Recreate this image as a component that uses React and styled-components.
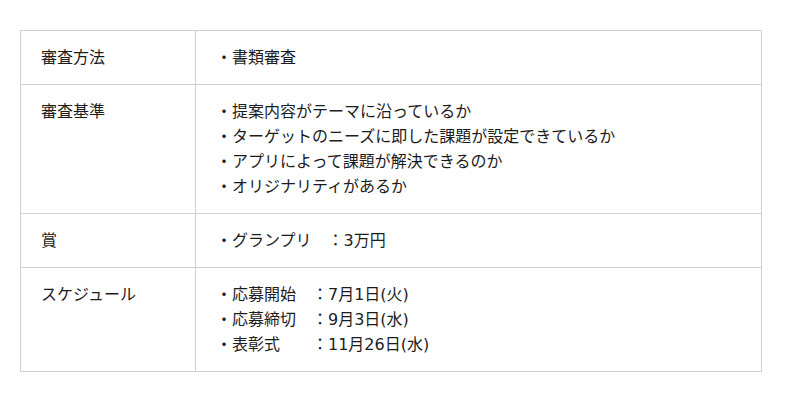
import React from 'react'
import styled, { createGlobalStyle } from 'styled-components'

const GlobalStyle = createGlobalStyle`
  body {
    margin: 0;
    background: #fff;
    font-family: "DejaVu Sans", "Noto Sans CJK JP", sans-serif;
    color: #1c1c1c;
  }
`

const Wrapper = styled.div`
  padding: 30px 0 0 20px;
`

const Table = styled.table`
  width: 742px;
  border-collapse: collapse;
  font-size: 16px;
  line-height: 25px;
`

const HeadCell = styled.th`
  width: 134px;
  padding: 14px 20px;
  border: 1px solid #d0d0d0;
  text-align: left;
  font-weight: normal;
  vertical-align: top;
`

const Cell = styled.td`
  padding: 14px 20px;
  border: 1px solid #d0d0d0;
  vertical-align: top;
`

const Line = styled.div`
  white-space: pre;
`

const rows = [
  { head: '審査方法', lines: ['・書類審査'] },
  {
    head: '審査基準',
    lines: [
      '・提案内容がテーマに沿っているか',
      '・ターゲットのニーズに即した課題が設定できているか',
      '・アプリによって課題が解決できるのか',
      '・オリジナリティがあるか',
    ],
  },
  { head: '賞', lines: ['・グランプリ　：3万円'] },
  {
    head: 'スケジュール',
    lines: ['・応募開始　：7月1日(火)', '・応募締切　：9月3日(水)', '・表彰式　　：11月26日(水)'],
  },
]

const App = () => {
  return (
    <>
      <GlobalStyle />
      <Wrapper>
        <Table>
          <tbody>
            {rows.map((row) => (
              <tr key={row.head}>
                <HeadCell>{row.head}</HeadCell>
                <Cell>
                  {row.lines.map((line) => (
                    <Line key={line}>{line}</Line>
                  ))}
                </Cell>
              </tr>
            ))}
          </tbody>
        </Table>
      </Wrapper>
    </>
  )
}

export default App
